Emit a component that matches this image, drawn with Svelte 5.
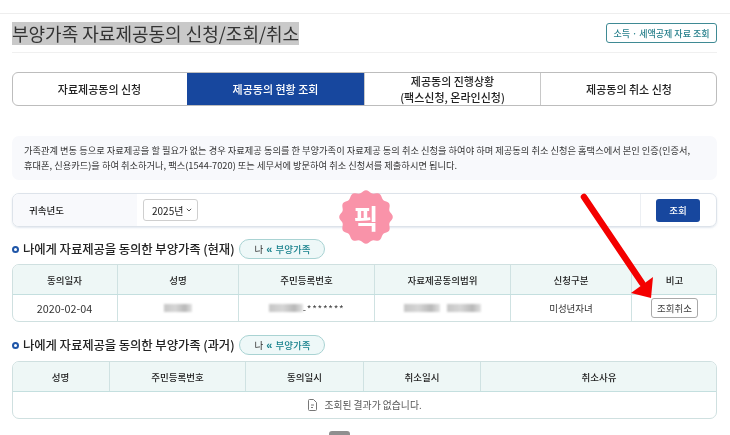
<script>
	const tabs = [
		{ label: ['자료제공동의 신청'], width: 175 },
		{ label: ['제공동의 현황 조회'], width: 178, active: true },
		{ label: ['제공동의 진행상황', '(팩스신청, 온라인신청)'], width: 176 },
		{ label: ['제공동의 취소 신청'], width: 176 }
	];
	const currentCols = [
		['동의일자', 106],
		['성명', 121],
		['주민등록번호', 136],
		['자료제공동의범위', 136],
		['신청구분', 121],
		['비고', 85]
	];
	const pastCols = [
		['성명', 98],
		['주민등록번호', 136],
		['동의일시', 118],
		['취소일시', 117],
		['취소사유', 236]
	];
	const gridOf = (cols) => cols.map((c) => c[1] + 'px').join(' ');

	// 스티커 테두리: 둥근 물결 12개
	const scallop = Array.from({ length: 120 }, (_, i) => {
		const a = (i / 120) * Math.PI * 2;
		const r = 25.5 + 1.3 * Math.cos(a * 12);
		return `${(27 + r * Math.sin(a)).toFixed(2)},${(27 - r * Math.cos(a)).toFixed(2)}`;
	}).join(' ');
</script>

<div class="page">
	<header class="title-row">
		<h1><span class="selected">부양가족 자료제공동의 신청/조회/취소</span></h1>
		<button class="link-btn">소득 · 세액공제 자료 조회</button>
	</header>

	<nav class="tabs">
		{#each tabs as tab}
			<div class="tab" class:active={tab.active} style="width: {tab.width}px">
				{#each tab.label as line}
					<span>{line}</span>
				{/each}
			</div>
		{/each}
	</nav>

	<p class="notice">
		가족관계 변동 등으로 자료제공을 할 필요가 없는 경우 자료제공 동의를 한 부양가족이 자료제공 동의 취소 신청을 하여야 하며 제공동의 취소 신청은 홈택스에서 본인 인증(인증서,<br />
		휴대폰, 신용카드)을 하여 취소하거나, 팩스(1544-7020) 또는 세무서에 방문하여 취소 신청서를 제출하시면 됩니다.
	</p>

	<section class="search">
		<div class="search-label">귀속년도</div>
		<div class="search-field">
			<div class="select">
				2025년
				<svg width="6" height="4" viewBox="0 0 6 4"><path d="M.8.8L3 3l2.200-2.200" fill="none" stroke="#555" stroke-width="1" /></svg>
			</div>
		</div>
		<div class="search-action"><button class="primary">조회</button></div>
	</section>

	<div class="section-head first">
		<i class="dot"></i>
		<h2>나에게 자료제공을 동의한 부양가족 (현재)</h2>
		<span class="pill">나 <b>«</b> <em>부양가족</em></span>
	</div>

	<div class="table">
		<div class="row head" style="grid-template-columns: {gridOf(currentCols)}">
			{#each currentCols as col}
				<div class="cell">{col[0]}</div>
			{/each}
		</div>
		<div class="row body" style="grid-template-columns: {gridOf(currentCols)}">
			<div class="cell date">2020-02-04</div>
			<div class="cell"><span class="mosaic" style="width: 28px"></span></div>
			<div class="cell"><span class="mosaic" style="width: 34px"></span><span class="stars">-*******</span></div>
			<div class="cell range"><span class="mosaic" style="width: 36px"></span><span class="mosaic" style="width: 34px"></span></div>
			<div class="cell">미성년자녀</div>
			<div class="cell"><button class="cancel">조회취소</button></div>
		</div>
	</div>

	<div class="section-head second">
		<i class="dot"></i>
		<h2>나에게 자료제공을 동의한 부양가족 (과거)</h2>
		<span class="pill">나 <b>«</b> <em>부양가족</em></span>
	</div>

	<div class="table past">
		<div class="row head" style="grid-template-columns: {gridOf(pastCols)}">
			{#each pastCols as col}
				<div class="cell">{col[0]}</div>
			{/each}
		</div>
		<div class="empty">
			<svg width="11" height="12" viewBox="0 0 11 12" fill="none" stroke="#777" stroke-width="1">
				<path d="M1.500 1.500a1 1 0 0 1 1-1h4l3 3v7a1 1 0 0 1-1 1h-6a1 1 0 0 1-1-1z" />
				<path d="M4 6h3M4 8.500h2" />
			</svg>
			조회된 결과가 없습니다.
		</div>
	</div>

	<div class="scroll-top"></div>

	<!-- 리뷰 이미지 위에 얹힌 스티커와 화살표 -->
	<div class="sticker">
		<svg width="54" height="54" viewBox="0 0 54 54">
			<polygon fill="#f993a9" points={scallop} />
		</svg>
		<span>픽</span>
	</div>
	<svg class="arrow" width="90" height="126" viewBox="0 0 90 126">
		<path d="M5 4L63 90" stroke="#f40000" stroke-width="6.500" stroke-linecap="round" fill="none" />
		<path d="M74 84L72 105L52 100z" fill="#f40000" />
	</svg>
</div>

<style>
	:global(body) {
		margin: 0;
		background: #fff;
	}

	.page {
		position: relative;
		box-sizing: border-box;
		width: 730px;
		height: 435px;
		overflow: hidden;
		padding: 13px 13px 0 12px;
		font-family: 'Noto Sans CJK KR', 'Noto Sans', sans-serif;
		color: #222;
		background: #fff;
		filter: blur(0.25px);
	}

	.page::before {
		content: '';
		position: absolute;
		left: 0;
		right: 0;
		top: 13px;
		height: 1px;
		background: #eeeeee;
	}

	.title-row {
		display: flex;
		align-items: center;
		justify-content: space-between;
		height: 38px;
		border-bottom: 1px solid #f0f0f0;
		padding-top: 1px;
		box-sizing: content-box;
	}

	h1 {
		margin: 0;
		font-size: 18px;
		font-weight: 400;
		line-height: 23px;
		color: #333;
	}

	.selected {
		display: block;
		background: #c9c9c9;
		white-space: nowrap;
	}

	.link-btn {
		width: 111px;
		height: 20px;
		padding: 0;
		border: 1px solid #3f8a94;
		border-radius: 3px;
		background: #fff;
		color: #28808c;
		font: 500 9px 'Noto Sans CJK KR', sans-serif;
	}

	.tabs {
		display: flex;
		margin-top: 19px;
		height: 34px;
		box-sizing: border-box;
		border: 1px solid #bdbdbd;
		border-radius: 6px;
		overflow: hidden;
	}

	.tab {
		display: flex;
		flex-direction: column;
		align-items: center;
		justify-content: center;
		font-size: 11px;
		font-weight: 500;
		line-height: 16px;
		color: #222;
		border-right: 1px solid #c8c8c8;
		box-sizing: border-box;
		flex: none;
	}

	.tab:first-child {
		margin-left: -1px;
		border-right: none;
	}

	.tab:last-child {
		border-right: none;
	}

	.tab.active {
		background: #17479e;
		color: #fff;
		margin-top: -1px;
		margin-bottom: -1px;
	}

	.notice {
		margin: 30px 0 0;
		height: 44px;
		box-sizing: border-box;
		padding: 7px 12px;
		background: #f8f9fc;
		border-radius: 7px;
		font-size: 9.25px;
		line-height: 15px;
		color: #333;
		white-space: nowrap;
		overflow: hidden;
	}

	.search {
		display: flex;
		height: 34px;
		margin-top: 13px;
		box-sizing: border-box;
		border: 1px solid #dde3ea;
		border-radius: 7px;
		box-shadow: 0 1px 2px rgba(170, 185, 205, 0.35);
		overflow: hidden;
	}

	.search-label {
		display: flex;
		align-items: center;
		width: 124px;
		padding-left: 16px;
		box-sizing: border-box;
		background: #f8f9fc;
		font-size: 9.5px;
		font-weight: 500;
	}

	.search-field {
		flex: 1;
		display: flex;
		align-items: center;
		padding-left: 6px;
	}

	.select {
		display: flex;
		align-items: center;
		gap: 3px;
		width: 55px;
		height: 22px;
		padding-left: 8px;
		box-sizing: border-box;
		border: 1px solid #cfcfcf;
		border-radius: 3px;
		font-size: 10px;
		color: #222;
	}

	.search-action {
		display: flex;
		align-items: center;
		width: 76px;
		padding-left: 15px;
		box-sizing: border-box;
		border-left: 1px solid #eceff3;
	}

	.primary {
		width: 44px;
		height: 23px;
		padding: 0;
		border: 0;
		border-radius: 3px;
		background: #17479e;
		color: #fff;
		font: 500 9.5px 'Noto Sans CJK KR', sans-serif;
	}

	.section-head {
		display: flex;
		align-items: center;
		height: 20px;
	}

	.section-head.first {
		margin-top: 12px;
	}

	.section-head.second {
		margin-top: 13px;
	}

	.dot {
		width: 7px;
		height: 7px;
		box-sizing: border-box;
		border: 2px solid #1f56a8;
		border-radius: 50%;
		margin-right: 4px;
	}

	h2 {
		margin: 0;
		font-size: 12.4px;
		font-weight: 500;
		letter-spacing: -0.1px;
		color: #222;
		white-space: nowrap;
	}

	.pill {
		display: flex;
		align-items: center;
		justify-content: center;
		gap: 3px;
		width: 86px;
		height: 20px;
		margin-left: 5px;
		box-sizing: border-box;
		border: 1px solid #a9d3d3;
		border-radius: 10px;
		background: #eef8f8;
		font-size: 9.5px;
		color: #333;
	}

	.pill b {
		color: #17808c;
		font-size: 11px;
		font-family: 'Liberation Sans', sans-serif;
	}

	.pill em {
		font-style: normal;
		font-weight: 500;
		color: #17808c;
	}

	.table {
		margin-top: 5px;
		border: 1px solid #cfe0e0;
		border-radius: 7px;
		overflow: hidden;
		font-size: 9.5px;
	}

	.table.past {
		margin-top: 6px;
	}

	.row {
		display: grid;
		margin-left: -1px;
		width: 705px;
	}

	.row.head {
		height: 29px;
		background: #eef7f6;
		border-bottom: 1px solid #c4dfdf;
		font-weight: 500;
	}

	.row.body {
		height: 26px;
		color: #333;
	}

	.cell {
		display: flex;
		align-items: center;
		justify-content: center;
		border-right: 1px solid #cfe2e2;
		box-sizing: border-box;
	}

	.cell:last-child {
		border-right: none;
	}

	.date {
		font-size: 10.8px;
	}

	.range {
		gap: 7px;
	}

	.mosaic {
		display: inline-block;
		height: 8px;
		background: linear-gradient(90deg, #c6c6c6, #d6d6d6 40%, #b8b8b8 75%, #e2e2e2);
		filter: blur(1px);
	}

	.stars {
		font-size: 10px;
		letter-spacing: 0.7px;
		color: #444;
	}

	.cancel {
		width: 47px;
		height: 20px;
		padding: 0;
		border: 1px solid #a9a9a9;
		border-radius: 3px;
		background: #fff;
		color: #444;
		font: 400 9.5px 'Noto Sans CJK KR', sans-serif;
	}

	.empty {
		display: flex;
		align-items: center;
		justify-content: center;
		gap: 6px;
		height: 26px;
		font-size: 9.8px;
		color: #555;
	}

	.scroll-top {
		position: absolute;
		left: 329px;
		top: 431px;
		width: 21px;
		height: 8px;
		border-radius: 3px;
		background: #8f8f8f;
	}

	.sticker {
		position: absolute;
		left: 339px;
		top: 190px;
		width: 54px;
		height: 54px;
		display: flex;
		align-items: center;
		justify-content: center;
	}

	.sticker svg {
		position: absolute;
		inset: 0;
	}

	.sticker span {
		position: relative;
		color: #fff;
		font-size: 27px;
		font-weight: 700;
		line-height: 1;
	}

	.arrow {
		position: absolute;
		left: 579px;
		top: 193px;
	}
</style>
